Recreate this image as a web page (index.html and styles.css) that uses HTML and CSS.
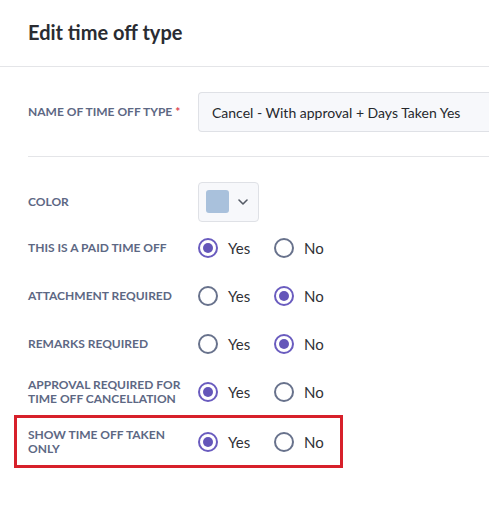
FILE: index.html
```html
<!DOCTYPE html>
<html lang="en">
<head>
<meta charset="utf-8">
<title>Edit time off type</title>
<link rel="stylesheet" href="styles.css">
</head>
<body>
<div class="page">
  <header class="header">
    <h1 class="title">Edit time off type</h1>
  </header>
  <form class="form">
    <div class="row row-name">
      <label class="label">NAME OF TIME OFF TYPE<span class="req">*</span></label>
      <div class="text-input">Cancel - With approval + Days Taken Yes</div>
    </div>
    <div class="divider"></div>
    <div class="row row-color">
      <label class="label">COLOR</label>
      <div class="color-picker">
        <span class="swatch"></span>
        <svg class="chev" width="10" height="6" viewBox="0 0 10 6"><path d="M1 1l4 4 4-4" fill="none" stroke="#555b66" stroke-width="1.6" stroke-linecap="round" stroke-linejoin="round"/></svg>
      </div>
    </div>
    <div class="row row-radio">
      <label class="label">THIS IS A PAID TIME OFF</label>
      <div class="radios">
        <span class="opt"><span class="radio checked"></span>Yes</span>
        <span class="opt"><span class="radio"></span>No</span>
      </div>
    </div>
    <div class="row row-radio">
      <label class="label">ATTACHMENT REQUIRED</label>
      <div class="radios">
        <span class="opt"><span class="radio"></span>Yes</span>
        <span class="opt"><span class="radio checked"></span>No</span>
      </div>
    </div>
    <div class="row row-radio">
      <label class="label">REMARKS REQUIRED</label>
      <div class="radios">
        <span class="opt"><span class="radio"></span>Yes</span>
        <span class="opt"><span class="radio checked"></span>No</span>
      </div>
    </div>
    <div class="row row-radio">
      <label class="label">APPROVAL REQUIRED FOR<br>TIME OFF CANCELLATION</label>
      <div class="radios">
        <span class="opt"><span class="radio checked"></span>Yes</span>
        <span class="opt"><span class="radio"></span>No</span>
      </div>
    </div>
    <div class="highlight">
      <div class="row row-radio row-hl">
        <label class="label">SHOW TIME OFF TAKEN<br>ONLY</label>
        <div class="radios">
          <span class="opt"><span class="radio checked"></span>Yes</span>
          <span class="opt"><span class="radio"></span>No</span>
        </div>
      </div>
    </div>
  </form>
</div>
</body>
</html>
```
FILE: styles.css
```css
* { box-sizing: border-box; }
html, body { margin: 0; padding: 0; background: #fff; overflow: hidden; }
body { font-family: Lato, "Noto Sans", sans-serif; color: #2b2d33; }
.page { width: 489px; }
.header {
  height: 67px;
  border-bottom: 1px solid #e4e5e8;
  padding: 0 28px;
  display: flex;
  align-items: center;
}
.title {
  margin: 0;
  font-size: 20px;
  font-weight: 700;
  color: #2a2c32;
  line-height: 1;
  padding-bottom: 2px;
}
.form { padding: 25px 0 0 28px; }
.row { display: flex; align-items: center; }
.label {
  width: 170px;
  flex: none;
  font-size: 12px;
  font-weight: 700;
  color: #5d6884;
  line-height: 14px;
}
.req { color: #e0454f; margin-left: 3px; }
.row-name { height: 40px; }
.text-input {
  flex: none;
  width: 291px;
  height: 40px;
  border: 1px solid #dfe1e6;
  border-right: 0;
  border-radius: 4px 0 0 4px;
  background: #f7f8fb;
  display: flex;
  align-items: center;
  padding-left: 13px;
  font-size: 14px;
  color: #26282d;
  white-space: nowrap;
  overflow: hidden;
}
.divider { height: 1px; background: #e4e5e8; margin: 24px 0 24px; }
.row-color { height: 41px; margin-bottom: 2px; }
.color-picker {
  width: 61px;
  height: 40px;
  border: 1px solid #dfe1e6;
  border-radius: 4px;
  background: #f7f8fb;
  display: flex;
  align-items: center;
  padding-left: 7px;
  gap: 9px;
}
.swatch {
  width: 23px;
  height: 23px;
  border-radius: 3px;
  background: #a9c1dc;
}
.chev { display: block; margin-top: 1px; }
.row-radio { height: 48px; }
.radios { display: flex; align-items: center; }
.opt {
  display: flex;
  align-items: center;
  font-size: 15px;
  color: #2f3136;
  width: 76px;
}
.radio {
  width: 20px;
  height: 20px;
  border: 2px solid #68728c;
  border-radius: 50%;
  margin-right: 10px;
  flex: none;
  display: flex;
  align-items: center;
  justify-content: center;
}
.radio.checked { border-color: #6a5cbf; }
.radio.checked::after {
  content: "";
  width: 10px;
  height: 10px;
  border-radius: 50%;
  background: #6456b9;
}
.highlight {
  margin-left: -14px;
  width: 329px;
  border: 3px solid #d7202a;
  padding-left: 11px;
  margin-top: -1px;
}
.row-hl { height: 47px; }
```
